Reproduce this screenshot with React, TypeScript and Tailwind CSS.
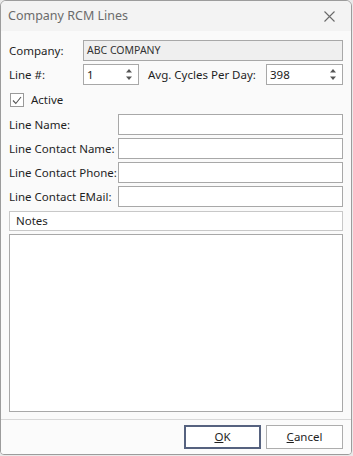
import React from 'react';

const FONT = { fontFamily: '"Segoe UI", "Noto Sans", "Open Sans", sans-serif' };

function Spinner({ value, className }: { value: string; className: string }) {
  return (
    <div className={`flex items-center h-[21px] bg-white border border-[#a8a8a8] ${className}`}>
      <span className="flex-1 pl-[3px] text-[11.5px] text-[#1a1a1a] leading-none">{value}</span>
      <div className="flex flex-col items-center justify-center gap-[3px] w-[14px] mr-[2px]">
        <svg width="8" height="5" viewBox="0 0 8 5">
          <path d="M1 4.5 L4 1 L7 4.5 Z" fill="#555" />
        </svg>
        <svg width="8" height="5" viewBox="0 0 8 5">
          <path d="M1 0.5 L4 4 L7 0.5 Z" fill="#555" />
        </svg>
      </div>
    </div>
  );
}

function FieldRow({ label }: { label: string }) {
  return (
    <div className="flex items-center h-[21px]">
      <span className="w-[109px] text-[11.5px] text-[#1f1f1f] whitespace-nowrap">{label}</span>
      <div className="flex-1 h-[21px] bg-white border border-[#a8a8a8]" />
    </div>
  );
}

export default function App() {
  return (
    <div className="w-[353px] h-[456px] bg-[#e9e9e9]" style={FONT}>
      <div className="w-[352px] h-[455px] flex flex-col bg-[#fafafa] border border-[#9c9c9c] rounded-t-[6px] rounded-b-[4px] overflow-hidden">
        {/* title bar */}
        <div className="flex items-center justify-between h-[30px] pl-[7px] pr-[16px] bg-[#f3f3f3]">
          <span className="text-[12.5px] text-[#6b6b6b]">Company RCM Lines</span>
          <svg width="11" height="11" viewBox="0 0 11 11">
            <path d="M0.5 0.5 L10.5 10.5 M10.5 0.5 L0.5 10.5" stroke="#6a6a6a" strokeWidth="1.1" />
          </svg>
        </div>

        {/* body */}
        <div className="flex flex-col px-[8px] pt-[9px]">
          <div className="flex items-center h-[21px]">
            <span className="w-[74px] text-[11.5px] text-[#1f1f1f]">Company:</span>
            <div className="flex-1 h-[21px] flex items-center pl-[3px] bg-[#efefef] border border-[#a8a8a8] text-[10.5px] text-[#333]">
              ABC COMPANY
            </div>
          </div>

          <div className="flex items-center h-[21px] mt-[3px]">
            <span className="w-[74px] text-[11.5px] text-[#1f1f1f]">Line #:</span>
            <Spinner value="1" className="w-[56px]" />
            <span className="ml-[9px] w-[118px] text-[11.5px] text-[#1f1f1f] whitespace-nowrap">Avg. Cycles Per Day:</span>
            <Spinner value="398" className="flex-1" />
          </div>

          <div className="flex items-center h-[16px] mt-[7px] pl-[1px]">
            <div className="w-[14px] h-[14px] border border-[#9a9a9a] bg-white flex items-center justify-center">
              <svg width="10" height="9" viewBox="0 0 10 9">
                <path d="M1 4.5 L3.8 7.5 L9 1" fill="none" stroke="#555" strokeWidth="1.1" />
              </svg>
            </div>
            <span className="ml-[7px] text-[11.5px] text-[#1f1f1f]">Active</span>
          </div>

          <div className="flex flex-col gap-[3px] mt-[6px]">
            <FieldRow label="Line Name:" />
            <FieldRow label="Line Contact Name:" />
            <FieldRow label="Line Contact Phone:" />
            <FieldRow label="Line Contact EMail:" />
          </div>

          <div className="flex items-center h-[20px] mt-[4px] pl-[6px] bg-white border border-[#c8c8c8] text-[11.5px] text-[#1f1f1f]">
            Notes
          </div>
          <div className="h-[178px] mt-[3px] bg-white border border-[#a8a8a8]" />
        </div>

        {/* footer */}
        <div className="mt-[7px] border-t border-[#d8d8d8] flex-1 bg-[#fbfbfb] flex justify-end items-start gap-[5px] pt-[5px] pr-[8px]">
          <button className="w-[77px] h-[24px] bg-white border-2 border-[#56627f] text-[11.5px] text-[#1f1f1f]">
            <span className="underline">O</span>K
          </button>
          <button className="w-[77px] h-[24px] bg-white border border-[#adadad] text-[11.5px] text-[#1f1f1f]">
            <span className="underline">C</span>ancel
          </button>
        </div>
      </div>
    </div>
  );
}
